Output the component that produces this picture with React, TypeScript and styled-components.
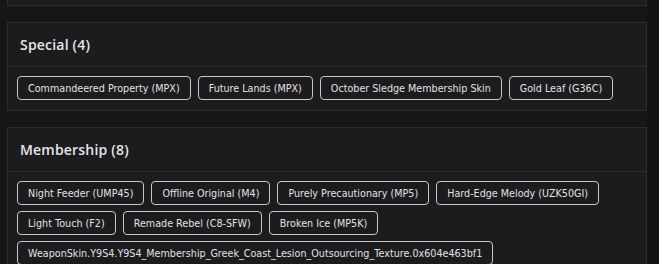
import styled, { createGlobalStyle } from "styled-components";

const GlobalStyle = createGlobalStyle`
  html, body {
    margin: 0;
    padding: 0;
    background-color: #161518;
    font-family: "DejaVu Sans", "Open Sans", sans-serif;
    overflow: hidden;
  }
`;

const groups = [
  {
    title: "Special",
    items: [
      "Commandeered Property (MPX)",
      "Future Lands (MPX)",
      "October Sledge Membership Skin",
      "Gold Leaf (G36C)",
    ],
  },
  {
    title: "Membership",
    items: [
      "Night Feeder (UMP45)",
      "Offline Original (M4)",
      "Purely Precautionary (MP5)",
      "Hard-Edge Melody (UZK50GI)",
      "Light Touch (F2)",
      "Remade Rebel (C8-SFW)",
      "Broken Ice (MP5K)",
      "WeaponSkin.Y9S4.Y9S4_Membership_Greek_Coast_Lesion_Outsourcing_Texture.0x604e463bf1",
    ],
  },
];

function App() {
  return (
    <>
      <GlobalStyle />
      <StyledPage>
        <StyledCard cut />
        {groups.map((group) => (
          <StyledCard key={group.title}>
            <StyledHeader>
              <StyledTitle>
                {group.title} ({group.items.length})
              </StyledTitle>
            </StyledHeader>
            <StyledChipList>
              {group.items.map((item) => (
                <StyledChip key={item}>{item}</StyledChip>
              ))}
            </StyledChipList>
          </StyledCard>
        ))}
      </StyledPage>
    </>
  );
}

export default App;

const StyledPage = styled.div`
  display: flex;
  flex-direction: column;
  gap: 16px;
  width: 640px;
  padding-left: 7px;
  height: 264px;
  border-right: 12px solid #131215;
`;

const StyledCard = styled.section<{ cut?: boolean }>`
  background-color: #1c1b1e;
  border: 1px solid #2c2b2f;
  border-top-width: ${(props) => (props.cut ? "0" : "1px")};
  height: ${(props) => (props.cut ? "5px" : "auto")};
  flex-shrink: 0;
`;

const StyledHeader = styled.div`
  display: flex;
  align-items: center;
  height: 43px;
  padding: 0 12px;
  border-bottom: 1px solid #2c2b2f;
`;

const StyledTitle = styled.h3`
  margin: 0;
  font-family: "Open Sans", sans-serif;
  font-size: 14px;
  font-weight: 600;
  color: #e6e6e8;
  letter-spacing: 0.2px;
`;

const StyledChipList = styled.div`
  display: flex;
  flex-wrap: wrap;
  gap: 6px 7px;
  padding: 9px 9px 10px;
`;

const StyledChip = styled.span`
  display: inline-flex;
  align-items: center;
  box-sizing: border-box;
  height: 24px;
  padding: 0 10px;
  border: 1px solid #c8c8ca;
  border-radius: 4px;
  font-size: 9.6px;
  color: #e2e2e4;
  white-space: nowrap;
`;
